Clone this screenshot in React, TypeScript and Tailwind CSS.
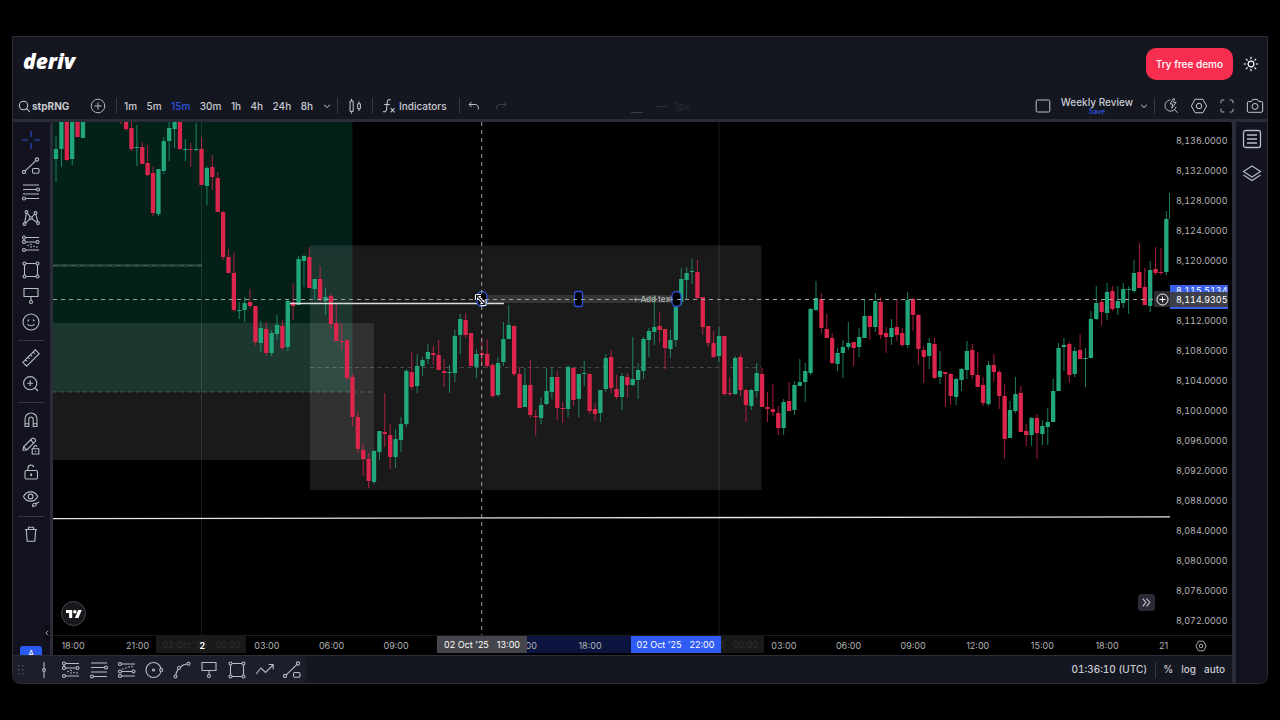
import type { ReactNode } from "react";

// [direction, high, open/close top, open/close bottom, low] in pane units
type Candle = ["u" | "d", number, number, number, number];

const LEADING: Candle[] = [
  ["u", 136, 149, 159, 182], ["u", 118, 118, 149, 167], ["d", 118, 118, 160, 161], ["u", 118, 118, 159, 165],
  ["d", 118, 118, 137, 137], ["u", 118, 118, 138, 138],
];

// twelve bars before these are above the visible range
const CANDLES: Candle[] = [
  ["d", 118, 118, 121, 124], ["d", 118, 118, 129, 131], ["d", 122, 128, 149, 151], ["u", 125, 147, 148, 166],
  ["d", 142, 147, 164, 164], ["d", 145, 163, 175, 176], ["d", 167, 173, 213, 216], ["u", 169, 169, 214, 216],
  ["u", 137, 141, 171, 174], ["u", 122, 128, 141, 161], ["u", 118, 118, 129, 148], ["d", 118, 118, 149, 150],
  ["u", 139, 149, 150, 161], ["d", 143, 149, 150, 167], ["u", 123, 149, 150, 151], ["d", 138, 149, 185, 185],
  ["u", 166, 168, 186, 205], ["d", 155, 167, 177, 190], ["d", 172, 178, 212, 212], ["d", 211, 212, 257, 260],
  ["d", 249, 257, 273, 273], ["d", 252, 273, 310, 312], ["u", 302, 310, 311, 319], ["u", 297, 303, 310, 322],
  ["d", 289, 302, 306, 308], ["d", 306, 306, 342, 345], ["u", 321, 328, 343, 352], ["d", 322, 329, 353, 356],
  ["u", 330, 333, 353, 356], ["u", 315, 325, 334, 340], ["d", 320, 326, 348, 351], ["u", 300, 301, 347, 351],
  ["d", 283, 302, 306, 320], ["u", 256, 259, 305, 305], ["u", 255, 256, 261, 287], ["d", 247, 257, 288, 288],
  ["u", 279, 279, 289, 300], ["d", 266, 279, 300, 302], ["u", 288, 297, 301, 315], ["d", 294, 296, 324, 328],
  ["d", 304, 323, 341, 341], ["d", 323, 341, 342, 350], ["d", 340, 340, 378, 380], ["d", 374, 377, 417, 426],
  ["d", 412, 417, 449, 453], ["d", 444, 450, 459, 476], ["d", 453, 459, 481, 488], ["u", 450, 451, 482, 484],
  ["u", 431, 431, 452, 460], ["d", 393, 432, 434, 447], ["d", 424, 435, 457, 469], ["u", 429, 439, 457, 468],
  ["u", 417, 424, 440, 452], ["u", 369, 371, 424, 427], ["d", 352, 372, 387, 390], ["u", 354, 366, 386, 393],
  ["u", 357, 360, 366, 376], ["u", 344, 352, 359, 364], ["d", 346, 353, 355, 365], ["d", 340, 355, 370, 370],
  ["d", 359, 371, 373, 387], ["u", 365, 372, 373, 393], ["u", 330, 336, 373, 382], ["u", 314, 319, 335, 354],
  ["d", 313, 320, 335, 338], ["d", 333, 333, 366, 366], ["u", 349, 354, 367, 378], ["d", 338, 353, 355, 366],
  ["d", 339, 354, 366, 368], ["d", 363, 365, 396, 398], ["u", 357, 363, 395, 397], ["u", 322, 339, 362, 366],
  ["u", 305, 325, 339, 339], ["d", 325, 326, 374, 376], ["d", 367, 374, 408, 408], ["u", 368, 385, 407, 407],
  ["d", 360, 385, 415, 418], ["d", 410, 416, 417, 436], ["u", 397, 405, 418, 424], ["u", 368, 391, 404, 405],
  ["u", 367, 377, 392, 399], ["d", 371, 377, 408, 420], ["d", 402, 408, 409, 423], ["u", 365, 367, 409, 417],
  ["d", 368, 368, 400, 406], ["u", 374, 374, 399, 417], ["u", 361, 373, 374, 386], ["d", 373, 374, 411, 414],
  ["d", 403, 409, 414, 421], ["u", 390, 390, 413, 422], ["u", 354, 358, 389, 392], ["d", 350, 357, 388, 393],
  ["d", 375, 389, 397, 399], ["u", 373, 376, 397, 410], ["d", 373, 377, 385, 398], ["u", 337, 379, 385, 386],
  ["u", 363, 370, 380, 399], ["u", 337, 339, 371, 379], ["u", 328, 331, 340, 357], ["u", 295, 327, 332, 345],
  ["d", 312, 326, 330, 343], ["d", 329, 329, 348, 369], ["u", 330, 340, 349, 358], ["u", 298, 302, 340, 347],
  ["u", 268, 279, 302, 306], ["u", 267, 273, 280, 300], ["u", 259, 271, 272, 284], ["d", 260, 272, 298, 299],
  ["d", 297, 297, 327, 335], ["d", 326, 326, 343, 347], ["d", 331, 343, 357, 358], ["u", 327, 336, 356, 362],
  ["d", 336, 336, 394, 396], ["d", 377, 393, 394, 396], ["u", 356, 358, 394, 395], ["d", 354, 357, 390, 396],
  ["d", 389, 390, 405, 422], ["u", 389, 390, 406, 410], ["u", 363, 373, 391, 397], ["d", 368, 374, 407, 407],
  ["d", 392, 407, 409, 422], ["d", 384, 409, 412, 416], ["d", 406, 413, 428, 435], ["u", 399, 402, 428, 435],
  ["d", 382, 401, 411, 411], ["u", 381, 385, 410, 415], ["u", 359, 382, 386, 386], ["u", 363, 371, 382, 402],
  ["u", 308, 309, 373, 375], ["u", 281, 298, 310, 311], ["d", 293, 299, 328, 333], ["d", 314, 329, 338, 338],
  ["d", 333, 338, 363, 364], ["u", 348, 353, 364, 371], ["u", 340, 347, 353, 378], ["u", 322, 343, 347, 350],
  ["d", 342, 342, 348, 366], ["u", 328, 337, 347, 357], ["u", 299, 316, 338, 338], ["d", 315, 316, 327, 340],
  ["u", 293, 301, 327, 332], ["d", 297, 302, 335, 339], ["d", 327, 333, 337, 353], ["u", 319, 328, 337, 345],
  ["d", 299, 327, 335, 341], ["d", 328, 333, 345, 347], ["u", 292, 300, 345, 348], ["d", 298, 299, 315, 331],
  ["d", 314, 315, 349, 365], ["d", 346, 350, 357, 383], ["u", 338, 343, 356, 369], ["d", 338, 344, 378, 379],
  ["u", 351, 371, 377, 384], ["d", 372, 372, 374, 407], ["d", 373, 374, 396, 405], ["u", 378, 379, 397, 405],
  ["u", 368, 369, 380, 391], ["u", 341, 351, 370, 379], ["d", 344, 350, 375, 379], ["d", 352, 375, 387, 387],
  ["d", 377, 385, 403, 406], ["u", 361, 365, 404, 406], ["d", 354, 365, 372, 382], ["d", 370, 372, 396, 409],
  ["d", 384, 396, 439, 459], ["u", 401, 410, 438, 438], ["u", 377, 394, 411, 413], ["d", 386, 393, 432, 432],
  ["d", 424, 431, 435, 446], ["u", 417, 418, 435, 446], ["d", 414, 418, 433, 459], ["u", 420, 426, 434, 445],
  ["u", 408, 422, 427, 445], ["u", 379, 391, 422, 422], ["u", 343, 348, 391, 391], ["u", 338, 345, 347, 371],
  ["d", 342, 344, 375, 383], ["u", 347, 351, 374, 377], ["d", 334, 350, 359, 359], ["u", 348, 358, 359, 387],
  ["u", 311, 319, 358, 358], ["u", 286, 303, 319, 320], ["d", 300, 302, 312, 325], ["u", 283, 292, 313, 320],
  ["d", 286, 291, 309, 311], ["u", 286, 301, 308, 315], ["u", 283, 289, 303, 308], ["u", 286, 289, 290, 314],
  ["u", 260, 273, 291, 293], ["d", 243, 272, 288, 288], ["d", 268, 287, 305, 305], ["u", 261, 270, 306, 312],
  ["d", 247, 269, 273, 275], ["d", 248, 272, 273, 275], ["u", 211, 219, 272, 275],
];

const PANE = { x: 53, y: 122, w: 1117, h: 513 };
const FIRST_X = 56;
const STEP = 5.39;
const left = (x: number) => `${((x - PANE.x) / PANE.w) * 100}%`;
const top = (y: number) => `${((y - PANE.y) / PANE.h) * 100}%`;

const PRICES = [
  "8,136.0000", "8,132.0000", "8,128.0000", "8,124.0000", "8,120.0000", "", "8,112.0000", "8,108.0000", "8,104.0000",
  "8,100.0000", "8,096.0000", "8,092.0000", "8,088.0000", "8,084.0000", "8,080.0000", "8,076.0000", "8,072.0000",
];
// blanks are covered by a date tag
const TIMES = [
  "18:00", "21:00", "2", "03:00", "06:00", "09:00", "", "15:00", "18:00", "", "", "03:00", "06:00", "09:00",
  "12:00", "15:00", "18:00",
];

function Icon({ children, className = "size-5" }: { children: ReactNode; className?: string }) {
  return (
    <svg
      viewBox="0 0 20 20"
      className={`shrink-0 ${className}`}
      fill="none"
      stroke="currentColor"
      strokeWidth="1.1"
      aria-hidden="true"
    >
      {children}
    </svg>
  );
}

const icons = {
  cross: <path d="M10 1v6M10 13v6M1 10h6M13 10h6" />,
  trend: (
    <>
      <circle cx="3" cy="16" r="1.6" />
      <circle cx="16" cy="3.5" r="1.6" />
      <path d="M4.2 14.8 14.8 4.7" />
      <rect x="11.5" y="12.5" width="6.5" height="4.8" rx="1.2" />
    </>
  ),
  fib: (
    <>
      <path d="M2 3h16M2 7.5h13.5M2 12h16M4.5 16.5H18" />
      <circle cx="17" cy="7.5" r="1.5" />
      <circle cx="3" cy="16.5" r="1.5" />
    </>
  ),
  xabcd: (
    <>
      <circle cx="5.5" cy="4" r="1.4" />
      <circle cx="14.5" cy="5" r="1.4" />
      <circle cx="3.5" cy="16" r="1.4" />
      <circle cx="17" cy="15" r="1.4" />
      <circle cx="10" cy="10" r="1.3" />
      <path d="M5.3 5.4 3.8 14.6M6.3 5.2 9.2 9M13.6 6.1 11 9M14.9 6.4l1.8 7.2M4.7 15.2l4.3-4.3M11 10.9l4.8 3.3" />
    </>
  ),
  pattern: (
    <>
      <path d="M4.5 3.5H18M4.5 8H15M4.5 16H18" />
      <path d="M7 11.5h.1M10 10.5h.1M10 13h.1M13 12.5h.1M16 13h.1" strokeWidth="1.5" strokeLinecap="round" />
      <path d="M3 5v2" />
      <circle cx="3" cy="3.5" r="1.5" />
      <circle cx="3" cy="8" r="1.5" />
      <circle cx="16.5" cy="8" r="1.5" />
      <circle cx="3" cy="16" r="1.5" />
    </>
  ),
  forecast: (
    <>
      <path d="M4.5 4H18M4.5 11.5H15M4.5 16H18" />
      <path d="M6 9h.1M9 8h.1M12 7h.1M15 6.5h.1" strokeWidth="1.5" strokeLinecap="round" />
      <circle cx="3" cy="4" r="1.5" />
      <circle cx="3" cy="11.5" r="1.5" />
      <circle cx="16.5" cy="11.5" r="1.5" />
      <circle cx="3" cy="16" r="1.5" />
    </>
  ),
  rect: (
    <>
      <path d="M5 3.5h10M5 16.5h10M3.5 5v10M16.5 5v10" />
      <circle cx="3.5" cy="3.5" r="1.5" />
      <circle cx="16.5" cy="3.5" r="1.5" />
      <circle cx="3.5" cy="16.5" r="1.5" />
      <circle cx="16.5" cy="16.5" r="1.5" />
    </>
  ),
  callout: (
    <>
      <path d="M3 2.5h14v8H3zM10 10.5v4" />
      <circle cx="10" cy="16" r="1.5" />
    </>
  ),
  smile: (
    <>
      <circle cx="10" cy="10" r="8" />
      <path d="M7.3 7.5v1.8M12.7 7.5v1.8" strokeWidth="1.5" />
      <path d="M6.5 12c1.5 2.4 5.5 2.4 7 0" />
    </>
  ),
  ruler: (
    <path d="m1.8 14.3 12.5-12.5 3.9 3.9L5.7 18.2zM4.5 11.6l1.7 1.7M7 9.1l1.7 1.7M9.5 6.6l1.7 1.7M12 4.1l1.7 1.7" />
  ),
  zoom: (
    <>
      <circle cx="9.2" cy="9.2" r="6.6" />
      <path d="M9.2 6.3v5.8M6.3 9.2h5.8M14 14l3 3" />
    </>
  ),
  magnet: (
    <path d="M4 16.5V9a6 6 0 0 1 12 0v7.5h-3.8V9.2a2.2 2.2 0 0 0-4.4 0v7.3zM4 13.8h3.8M12.2 13.8H16" />
  ),
  pencilLock: (
    <>
      <path d="m2 14.2.6-3.4 8.3-8.3a1.6 1.6 0 0 1 2.3 0l.9.9a1.6 1.6 0 0 1 0 2.3L5.8 14zM9.6 4l2.9 2.9M2.8 11l3 2.8" />
      <path d="M11.2 12.8h6.6V18h-6.6zM12.7 12.6v-1.4a1.8 1.8 0 0 1 3.4-.6M14.5 14.8v1.2" />
    </>
  ),
  lock: (
    <>
      <rect x="4" y="8.5" width="12.5" height="8.5" rx="1.4" />
      <path d="M7 8.5V6a3 3 0 0 1 5.8-1" />
      <path d="M10.2 11.5v2.6" strokeWidth="1.8" />
    </>
  ),
  eye: (
    <>
      <path d="M2.5 8.5C5.5 2.3 13.7 2.3 16.7 8.5c-3 6.2-11.2 6.2-14.2 0z" />
      <circle cx="9.6" cy="8.5" r="2.4" />
      <path d="M11.5 18.3c0-2 1-3 2.4-3s1.8 1.2 1 2.2-2 .9-3.4.8zM15 15.5l3.2-1.5" />
    </>
  ),
  trash: <path d="M4 5.5h12M7.5 5.5V3.2h5v2.3M5.300 5.500l.9 11.700h7.600l.9-11.700" />,
  vline: (
    <>
      <path d="M10 2v6.5M10 11.5V18" />
      <circle cx="10" cy="10" r="1.4" />
    </>
  ),
  cycle: (
    <>
      <circle cx="9.5" cy="10" r="7.5" />
      <circle cx="9.5" cy="10" r="1" />
      <circle cx="17.2" cy="10" r="1.5" fill="#1c1f2b" />
    </>
  ),
  curve: (
    <>
      <circle cx="3.5" cy="16.5" r="1.5" />
      <circle cx="7" cy="8" r="1.5" />
      <circle cx="16.5" cy="3.8" r="1.5" />
      <path d="M3.8 15c.2-2.5 1-4 2.3-5.7M8.3 7.2C10 5.2 12.5 4.2 15 4" />
    </>
  ),
  zigzag: <path d="m1 14 5-6 4.500 4.500L18 5M13.500 4.500h4.700v4.700" />,
};

type IconName = keyof typeof icons;

const TOOLS: (IconName | "-")[] = [
  "cross", "trend", "fib", "xabcd", "pattern", "rect", "callout", "smile", "-",
  "ruler", "zoom", "-", "magnet", "pencilLock", "lock", "eye", "-", "trash",
];
const FAVORITES: IconName[] = [
  "vline", "pattern", "fib", "forecast", "cycle", "curve", "callout", "rect", "zigzag", "trend",
];
const INTERVALS = ["1m", "5m", "15m", "30m", "1h", "4h", "24h", "8h"];

function Divider() {
  return <span className="h-4 w-px shrink-0 bg-[#363945]" />;
}

function Header() {
  return (
    <header className="flex h-[54px] items-center justify-between pr-2 pl-[10px]">
      <a href="#home" className="pb-[6px] font-['Open_Sans',sans-serif] text-[21px] leading-6 font-extrabold text-white italic">
        deriv
      </a>
      <div className="flex items-center gap-[10px]">
        <button className="h-8 rounded-[10px] bg-[#f72e50] px-[10px] text-[10px] font-medium text-white">
          Try free demo
        </button>
        <button aria-label="Theme" className="text-white">
          <Icon className="size-4">
            <circle cx="10" cy="10" r="3.6" strokeWidth="1.4" />
            <path
              d="M10 1v3M10 16v3M1 10h3M16 10h3M3.6 3.6l2.1 2.1M14.3 14.3l2.1 2.1M3.6 16.4l2.1-2.1M14.3 5.7l2.1-2.1"
              strokeWidth="1.4"
            />
          </Icon>
        </button>
      </div>
    </header>
  );
}

function Toolbar() {
  return (
    <div className="flex h-7 items-center justify-between pt-[2px] pr-[3px] pl-[5px] text-[10px] font-medium">
      <div className="flex items-center">
        <button className="flex w-[72px] items-center gap-px font-bold">
          <Icon className="size-[13px]">
            <circle cx="8.5" cy="8.5" r="6.5" strokeWidth="1.6" />
            <path d="m13.2 13.2 5 5" strokeWidth="1.6" />
          </Icon>
          stpRNG
        </button>
        <button aria-label="Compare symbol" className="mr-[10px]">
          <Icon className="size-4">
            <circle cx="10" cy="10" r="8.5" />
            <path d="M10 5.5v9M5.5 10h9" />
          </Icon>
        </button>
        <Divider />
        <div className="mr-2 ml-[7px] flex w-[189px] items-center justify-between">
          {INTERVALS.map((item) => (
            <button key={item} className={item === "15m" ? "text-[#2f55e0]" : ""}>
              {item}
            </button>
          ))}
        </div>
        <button aria-label="More intervals" className="mr-1">
          <Icon className="size-3">
            <path d="m5 8 5 4.500L15 8" strokeWidth="1.600" />
          </Icon>
        </button>
        <Divider />
        <button aria-label="Chart type" className="mx-2">
          <Icon className="size-[18px]">
            <path d="M4.500 4.500h3.500v11.500H4.500zM6.200 2v2.500M6.200 16v2.500M13 7.500h3v5.500h-3zM14.500 5v2.500M14.500 13v2.500" />
          </Icon>
        </button>
        <Divider />
        <button className="mr-3 ml-2 flex items-center gap-[2px]">
          <Icon className="size-4">
            <path
              d="M12 2.500c-2.800-1.500-4 .2-4.300 3.500l-.6 7.500c-.2 3-1.800 4.500-4.600 3.500M4 8h7M12 12.500l5 5.500M17 12.500l-5 5.500"
              strokeWidth="1.300"
            />
          </Icon>
          Indicators
        </button>
        <Divider />
        <button aria-label="Undo" className="mr-[15px] ml-2">
          <Icon className="size-3">
            <path d="M6 3 2 7.500 6 12M2 7.500h10c4 0 5.500 3 5.500 8" strokeWidth="1.600" />
          </Icon>
        </button>
        <button aria-label="Redo" className="text-[#3f424e]">
          <Icon className="size-3">
            <path d="m14 3 4 4.500-4 4.500M18 7.500H8c-4 0-5.500 3-5.500 8" strokeWidth="1.600" />
          </Icon>
        </button>
        {/* drawing style bar, fading out */}
        <div className="ml-[124px] flex items-center gap-3 text-[#2a2c37]">
          <span className="mt-3 h-px w-3 bg-[#3a3c46]" />
          <span className="h-px w-3 bg-[#2c2e38]" />
          <span className="-ml-1 font-normal">1px</span>
        </div>
      </div>
      <div className="flex items-center">
        <button aria-label="Layout">
          <Icon className="size-4">
            <rect x="1.5" y="2.5" width="17" height="15" rx="1.5" strokeWidth="1.2" />
          </Icon>
        </button>
        <div className="mr-[5px] ml-[10px] flex flex-col items-center">
          <button className="text-[10px] leading-[11px]">Weekly Review</button>
          <button className="text-[7px] leading-2 text-[#2f55e0]">Save</button>
        </div>
        <button aria-label="Manage layouts" className="mr-1">
          <Icon className="size-3">
            <path d="m5 8 5 4.500L15 8" strokeWidth="1.600" />
          </Icon>
        </button>
        <Divider />
        <div className="ml-2 flex items-center gap-[11px]">
          <button aria-label="Quick search">
            <Icon className="size-4">
              <path d="M9 2.500a7 7 0 1 0 7.300 8.500M13.800 14l4.700 4.500M12.500 1 9 7.500h3.200L11 13l5.500-7.500H13L14.500 1z" />
            </Icon>
          </button>
          <button aria-label="Settings">
            <Icon className="size-[18px]">
              <path d="M5.700 2.500h8.600L18.500 10l-4.200 7.500H5.700L1.500 10z" />
              <circle cx="10" cy="10" r="3" />
            </Icon>
          </button>
          <button aria-label="Fullscreen">
            <Icon className="size-4">
              <path d="M2.500 6.500V4A1.500 1.500 0 0 1 4 2.500h2.500M13.500 2.500H16A1.500 1.500 0 0 1 17.500 4v2.500M17.500 13.500V16a1.500 1.500 0 0 1-1.500 1.500h-2.500M6.500 17.500H4A1.500 1.500 0 0 1 2.500 16v-2.500" />
            </Icon>
          </button>
          <button aria-label="Snapshot">
            <Icon className="size-[18px]">
              <path d="M3 5h3l1.500-2.300h5L14 5h3a1.500 1.500 0 0 1 1.500 1.500v9A1.500 1.500 0 0 1 17 17H3a1.500 1.500 0 0 1-1.500-1.500v-9A1.500 1.500 0 0 1 3 5z" />
              <circle cx="10" cy="10.500" r="3.300" />
            </Icon>
          </button>
        </div>
      </div>
    </div>
  );
}

function DrawingTools() {
  return (
    <nav className="relative flex w-[37px] shrink-0 flex-col items-center overflow-hidden bg-[#12131f] pt-[5px] pr-px text-[#b9bcc6]">
      {TOOLS.map((tool, i) =>
        tool === "-" ? (
          <span key={i} className="mt-[5px] mb-1 h-px w-[26px] bg-[#363945]" />
        ) : (
          <button
            key={i}
            aria-label={tool}
            className={`flex h-[26px] items-center ${tool === "cross" ? "text-[#2f50d8]" : ""}`}
          >
            <Icon>{icons[tool]}</Icon>
          </button>
        ),
      )}
      <button
        aria-label="Hide toolbar"
        className="absolute right-0 bottom-[14px] flex h-4 w-[6px] items-center rounded-l-sm bg-[#0b0c14]"
      >
        <Icon className="size-[6px]">
          <path d="M14 2 6 10l8 8" strokeWidth="3" />
        </Icon>
      </button>
      <span className="absolute -bottom-[3px] left-[7px] h-3 w-[22px] rounded-[3px] bg-[#2b5af0] text-center text-[9px] leading-[16px] text-white">
        A
      </span>
    </nav>
  );
}

function Bar({ x, candle }: { x: number; candle: Candle }) {
  const [dir, high, bodyTop, bodyBottom, low] = candle;
  return (
    <g fill={dir === "u" ? "#22a77d" : "#dc254c"}>
      <rect x={x - 0.5} y={high} width="1" height={low - high} opacity="0.75" />
      <rect x={x - 2.15} y={bodyTop} width="4.3" height={bodyBottom - bodyTop} />
    </g>
  );
}

function Pane() {
  return (
    <div className="relative min-w-0 flex-1 overflow-hidden bg-black">
      <span
        className="absolute text-[8px] leading-2 font-semibold whitespace-nowrap text-[#9a9a9a]"
        style={{ left: left(633), top: top(295) }}
      >
        + Add text
      </span>
      <svg
        viewBox={`${PANE.x} ${PANE.y} ${PANE.w} ${PANE.h}`}
        preserveAspectRatio="none"
        className="absolute inset-0 size-full"
        role="img"
        aria-label="stpRNG price chart"
      >
        <rect x="53" y="122" width="299.5" height="270" fill="#032119" />
        <rect x="53" y="323" width="321" height="137" fill="#fff" opacity="0.1" />
        <rect x="310" y="245.5" width="451.5" height="244.5" fill="#fff" opacity="0.1" />
        <path d="M201.5 122v513M719 122v513" stroke="#fff" opacity="0.1" />
        <path d="M53 265.5h149" stroke="#fff" strokeWidth="3" opacity="0.13" />
        <path d="M53 265.5h149" stroke="#fff" strokeDasharray="5 4" opacity="0.15" />
        <path d="M53 392h321M310 367.5h451" stroke="#fff" strokeDasharray="4 3.5" opacity="0.2" />
        <path d="M53 518.7 1170 516.8" stroke="#e4e4e4" strokeWidth="1.3" />
        {LEADING.map((c, i) => (
          <Bar key={i} x={FIRST_X + i * STEP} candle={c} />
        ))}
        {CANDLES.map((c, i) => (
          <Bar key={i} x={FIRST_X + (i + 12) * STEP} candle={c} />
        ))}
        <rect x="1169" y="193" width="1" height="26" fill="#22a77d" opacity="0.75" />
        <path d="M290 303.5h214" stroke="#dcdcdc" strokeWidth="1.5" />
        <rect x="482" y="295" width="194" height="8" fill="#fff" opacity="0.12" />
        <g fill="#000" stroke="#2f4fd6" strokeWidth="1.3">
          <rect x="477" y="291.5" width="10" height="15" rx="5" />
          <rect x="574.5" y="291.5" width="8" height="15" rx="2" />
          <rect x="672" y="291.5" width="9" height="15" rx="4.5" />
        </g>
        <path d="M53 299.5h1117" stroke="#a3a3a3" strokeDasharray="4 4" />
        <path d="M481.7 122v513" stroke="#a3a3a3" strokeDasharray="4 4" />
        <g fill="none" strokeLinejoin="round">
          <path d="m477 296 7.500 8M476.500 300v-4.500h4.500M485 300v4.500h-4.500" stroke="#fff" strokeWidth="3.200" />
          <path d="m477 296 7.500 8M476.500 300v-4.500h4.500M485 300v4.500h-4.500" stroke="#10131d" strokeWidth="1.100" />
        </g>
      </svg>
      <a
        href="#tradingview"
        aria-label="TradingView"
        className="absolute bottom-[9px] left-2 flex size-[25px] items-center justify-center rounded-full border border-[#45464b] bg-[#17181c]"
      >
        <svg viewBox="0 4 36 18" className="h-2 w-4" fill="#fff" aria-hidden="true">
          <path d="M14 22H7V11H0V4h14zM28 22h-8l7.500-18h8z" />
          <circle cx="20" cy="8" r="4" />
        </svg>
      </a>
      <button
        aria-label="Scroll to latest bar"
        className="absolute right-[15px] bottom-6 flex size-[17px] items-center justify-center rounded-[3px] bg-[#2a2b35]"
      >
        <Icon className="size-[11px]">
          <path d="m3 3 6 7-6 7M10 3l6 7-6 7" strokeWidth="2" />
        </Icon>
      </button>
      <button
        aria-label="Add alert"
        className="absolute right-0 flex size-4 items-center justify-center bg-[#2b2c32] text-white"
        style={{ top: top(291) }}
      >
        <Icon className="size-[13px]">
          <circle cx="10" cy="10" r="8.5" strokeWidth="1.5" />
          <path d="M10 5.5v9M5.5 10h9" strokeWidth="1.5" />
        </Icon>
      </button>
    </div>
  );
}

function PriceAxis() {
  return (
    <div className="relative flex w-[62px] shrink-0 flex-col justify-between bg-black pt-[11px] pb-[6px] pl-[6px] text-[9px] leading-4 text-[#b4b4b6] tabular-nums">
      {PRICES.map((price, i) => (
        <span key={i} className="h-4">
          {price}
        </span>
      ))}
      <span
        className="absolute left-0 h-6 w-[58px] bg-[#3a5fe8] pl-[6px] leading-[11px] text-white"
        style={{ top: top(285) }}
      >
        8,115.5134
      </span>
      <span
        className="absolute left-0 h-[15px] w-[58px] bg-[#3d3f4a] pl-[6px] leading-[15px] text-white"
        style={{ top: top(292) }}
      >
        8,114.9305
      </span>
    </div>
  );
}

function DateTag({ x, date, time, className }: { x: number; date: string; time: string; className: string }) {
  return (
    <span
      className={`absolute top-0 flex h-[17px] w-[90px] -translate-x-1/2 items-center justify-center gap-2 whitespace-nowrap ${className}`}
      style={{ left: left(x) }}
    >
      <span>{date}</span>
      <span>{time}</span>
    </span>
  );
}

function TimeAxis() {
  return (
    <div className="flex h-5 border-t border-[#1d1d20] bg-black text-[9px] text-[#b4b4b6]">
      <div className="relative flex min-w-0 flex-1 items-center overflow-hidden">
        <span
          className="absolute top-0 h-[17px] bg-[#0b1540]"
          style={{ left: left(482), right: `${((1170 - 676) / PANE.w) * 100}%` }}
        />
        <DateTag x={201.5} date="02 Oct '25" time="00:00" className="bg-[#19191a] text-[#303032]" />
        <DateTag x={719} date="02 Oct '25" time="00:00" className="bg-[#19191a] text-[#303032]" />
        <div className="relative ml-5 flex flex-1 justify-between">
          {TIMES.map((time, i) => (
            <span key={i} className={`flex w-0 justify-center ${time === "2" ? "font-semibold text-white" : ""}`}>
              {time}
            </span>
          ))}
        </div>
        <span className="ml-[52px] w-[11px]">21</span>
        <DateTag x={482} date="02 Oct '25" time="13:00" className="bg-[#45464b] text-white" />
        <DateTag x={675.5} date="02 Oct '25" time="22:00" className="bg-[#2f5cf5] text-white" />
      </div>
      <button aria-label="Axis settings" className="flex w-[62px] items-center justify-center">
        <Icon className="size-3">
          <path d="M5.700 2h8.600L18.500 10l-4.200 8H5.700L1.500 10z" strokeWidth="1.600" />
          <circle cx="10" cy="10" r="3" strokeWidth="1.600" />
        </Icon>
      </button>
    </div>
  );
}

function FavoritesBar() {
  return (
    <div className="flex h-7 items-center justify-between border-t border-[#2a2c37] pr-[7px] text-[10px] font-medium">
      <div className="flex h-full items-center rounded-r-sm bg-[#1c1f2b] text-[#b9bcc6]">
        <svg viewBox="0 0 8 10" className="mr-[5px] ml-1 h-[10px] w-2" fill="#4a4d59" aria-hidden="true">
          <path d="M1 0h1.500v1.500H1zM5 0h1.500v1.500H5zM1 4h1.500v1.500H1zM5 4h1.500v1.500H5zM1 8h1.500v1.500H1zM5 8h1.500v1.500H5z" />
        </svg>
        <div className="flex w-[276px]">
          {FAVORITES.map((tool) => (
            <button key={tool} aria-label={tool} className="flex flex-1 justify-center">
              <Icon>{icons[tool]}</Icon>
            </button>
          ))}
        </div>
      </div>
      <div className="flex items-center">
        <button className="mr-2 tabular-nums">01:36:10 (UTC)</button>
        <Divider />
        <button className="mr-2 ml-[7px]">%</button>
        <button className="mr-2">log</button>
        <button>auto</button>
      </div>
    </div>
  );
}

export default function App() {
  return (
    <main className="flex min-h-screen flex-col bg-black px-3 py-9 font-['Inter',sans-serif] text-[#c8cad2]">
      <div className="flex flex-1 flex-col overflow-hidden rounded-b-lg border border-[#2a2c37] bg-[#141620]">
        <Header />
        <Toolbar />
        <div className="flex flex-1 border-t-[3px] border-[#2a2c37]">
          <div className="flex min-w-0 flex-1 flex-col">
            <div className="flex flex-1">
              <DrawingTools />
              <div className="flex min-w-0 flex-1 flex-col overflow-hidden rounded-t-sm border-l-[3px] border-[#2a2c37]">
                <div className="flex flex-1">
                  <Pane />
                  <PriceAxis />
                </div>
                <TimeAxis />
              </div>
            </div>
            <FavoritesBar />
          </div>
          <aside className="flex w-[35px] shrink-0 flex-col items-center gap-[14px] border-l-4 border-[#2a2c37] bg-[#12131f] pt-[7px] text-[#b9bcc6]">
            <button aria-label="Watchlist">
              <Icon>
                <rect x="1.5" y="1.5" width="17" height="17" rx="2" strokeWidth="1.3" />
                <path d="M5 6h10M5 10h10M5 14h10" strokeWidth="1.3" />
              </Icon>
            </button>
            <button aria-label="Object tree">
              <Icon>
                <path d="M10 3 1.500 8.500 10 14l8.500-5.500zM1.500 12 10 17.500l8.500-5.500" />
              </Icon>
            </button>
          </aside>
        </div>
      </div>
    </main>
  );
}
